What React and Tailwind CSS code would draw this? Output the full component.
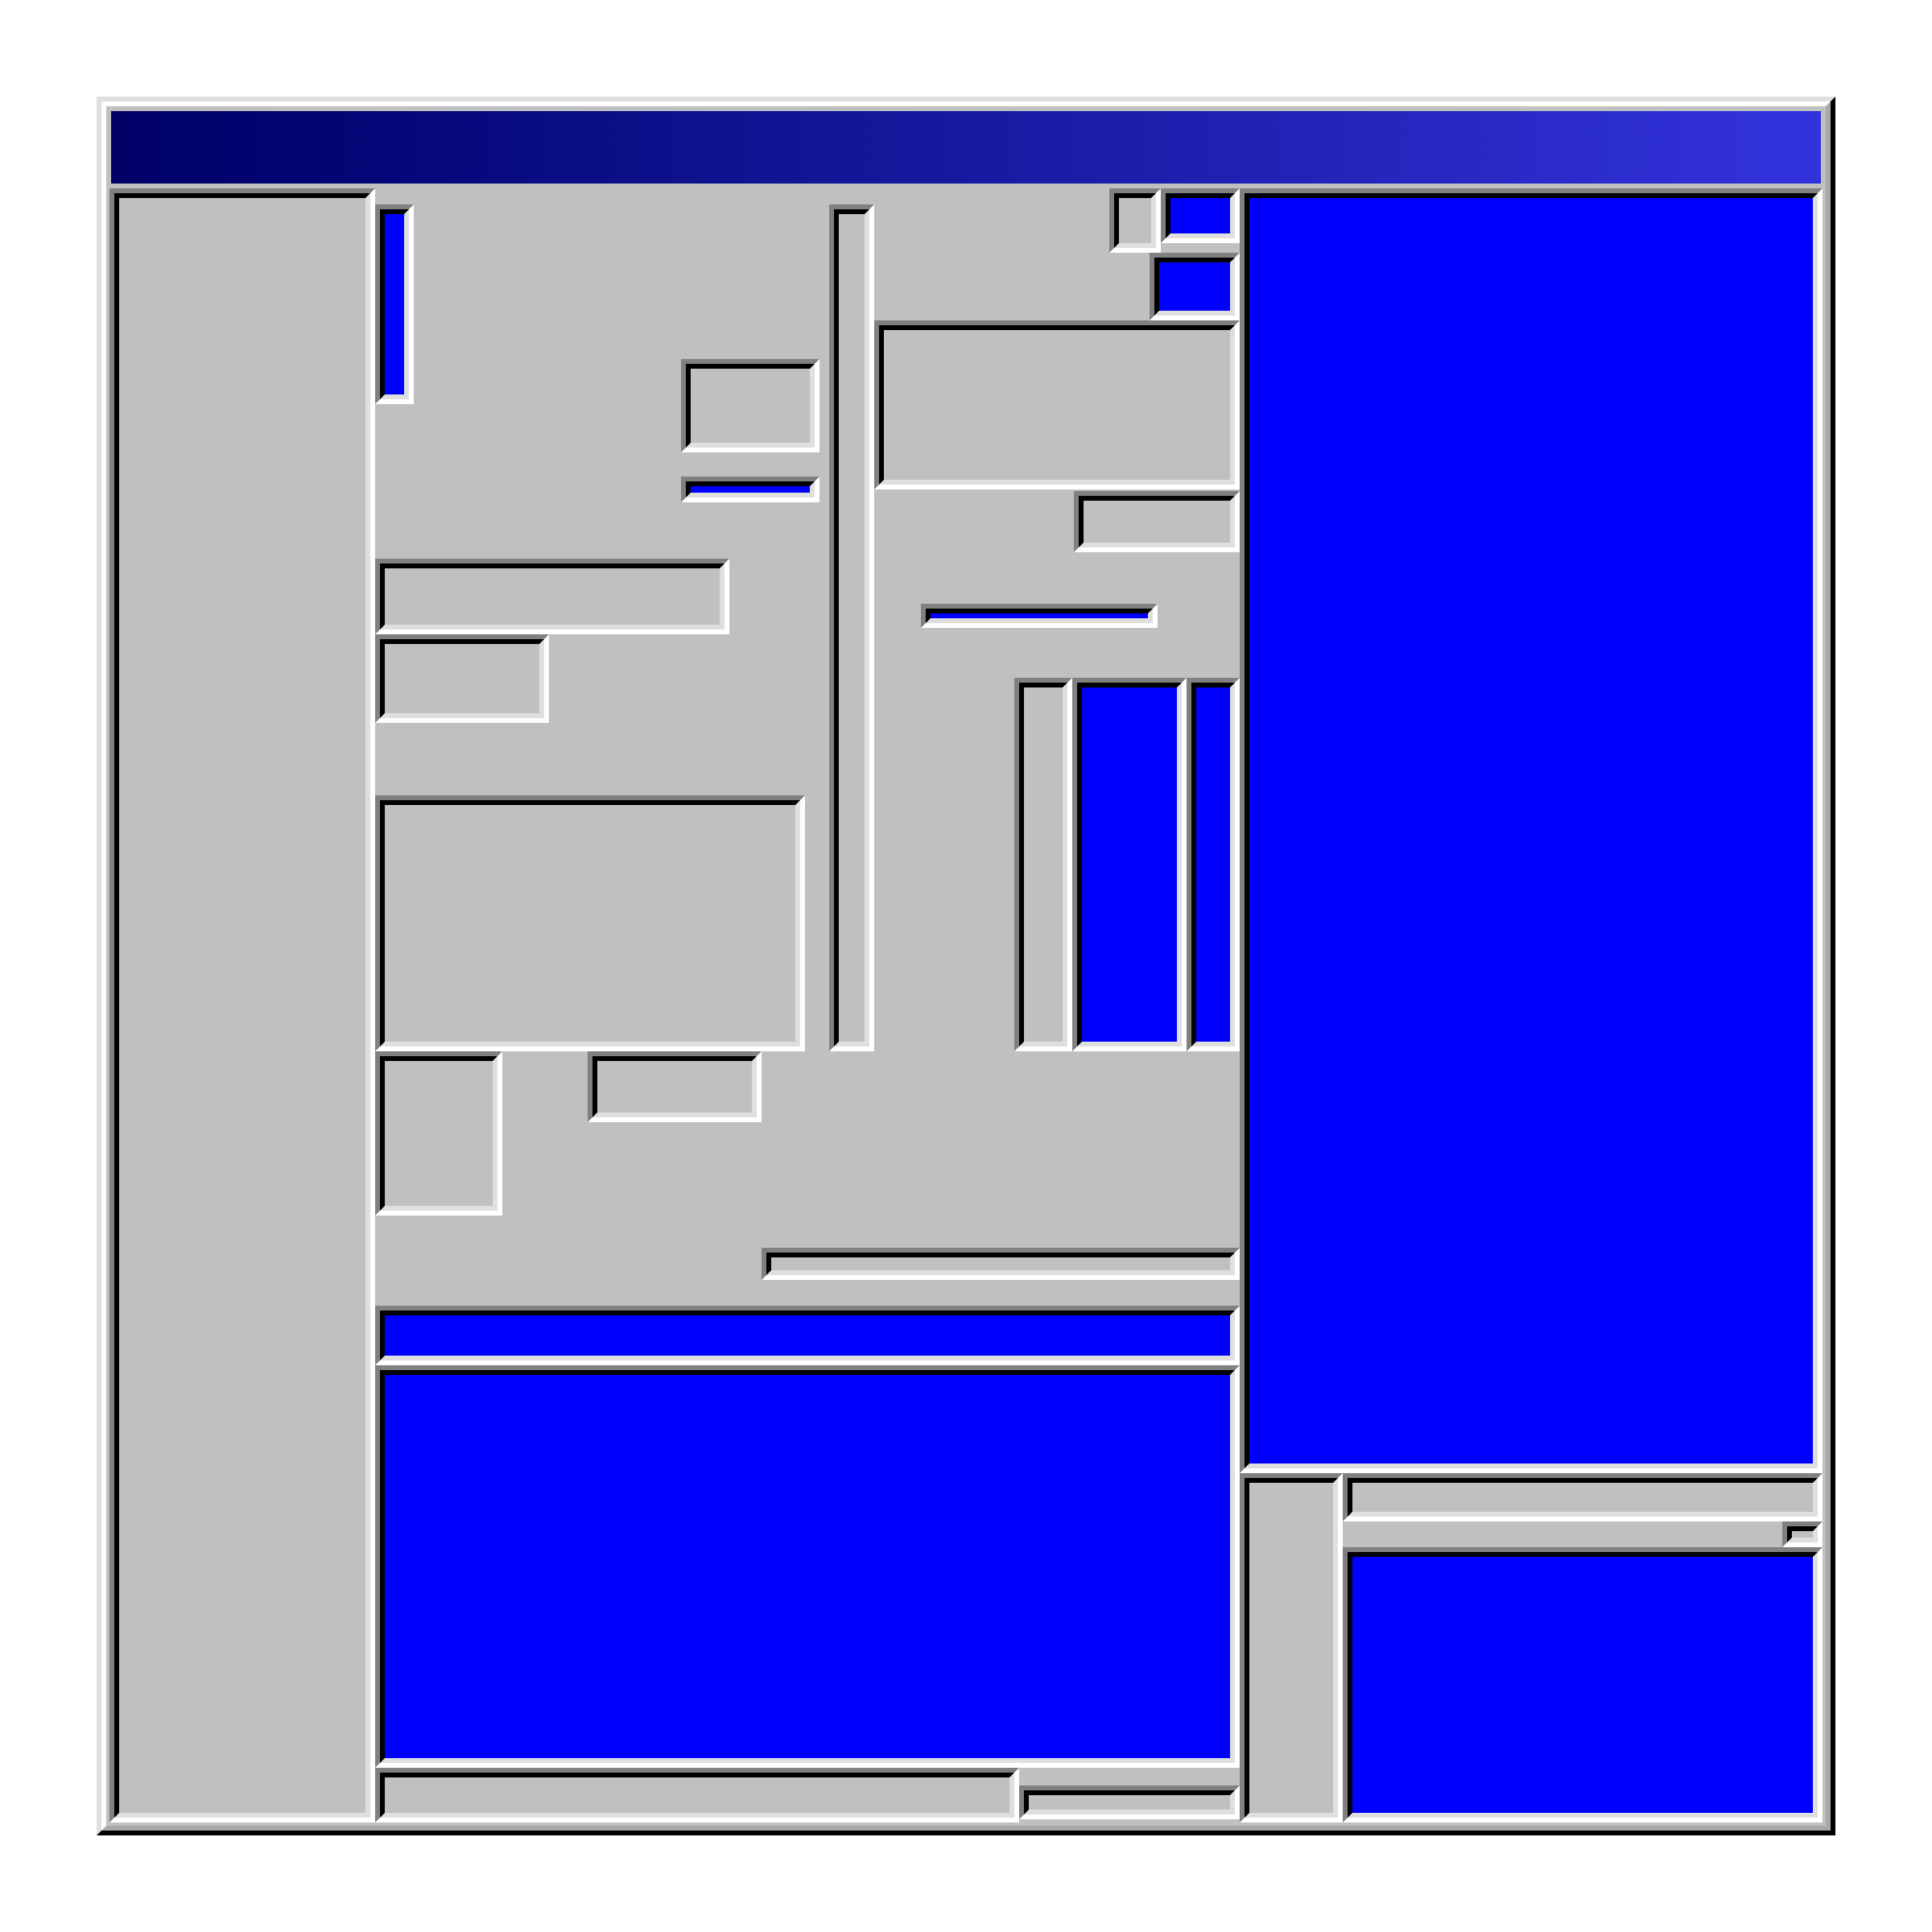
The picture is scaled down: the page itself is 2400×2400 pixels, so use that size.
import React from "react";

// sunken 98-style well: grey/black on top-left, light/white on bottom-right
function Well({ className = "", fill = "bg-[#c0c0c0]" }) {
  return (
    <div
      className={`shrink-0 border-[6px] border-t-[#808080] border-l-[#808080] border-r-white border-b-white ${className}`}
    >
      <div
        className={`h-full w-full border-[6px] border-t-black border-l-black border-r-[#dfdfdf] border-b-[#dfdfdf] ${fill}`}
      />
    </div>
  );
}

const BLUE = "bg-[#0000ff]";

export default function App() {
  return (
    <div className="min-h-screen bg-white p-[120px]">
      <div className="h-[2160px] w-[2160px] border-[6px] border-t-[#dfdfdf] border-l-[#dfdfdf] border-r-black border-b-black">
        <div className="flex h-full w-full flex-col border-[6px] border-t-white border-l-white border-r-[#a9a9a9] border-b-[#a9a9a9] bg-[#c0c0c0] p-[4px]">
          {/* title bar */}
          <div className="m-[2px] h-[90px] shrink-0 bg-linear-to-r from-[#000066] to-[#3333dd]" />

          {/* body */}
          <div className="mt-[4px] flex h-[2030px] shrink-0">
            {/* left pane */}
            <Well className="h-[2030px] w-[330px]" />

            {/* middle column */}
            <div className="flex w-[1074px] shrink-0 flex-col">
              <div className="flex h-[1072px] shrink-0">
                {/* left stack */}
                <div className="flex w-[564px] shrink-0 flex-col items-start">
                  <div className="flex h-[390px] shrink-0 items-start">
                    <Well className="mt-[20px] h-[248px] w-[48px]" fill={BLUE} />
                    <div className="ml-[332px] flex flex-col">
                      <Well className="mt-[212px] h-[116px] w-[172px]" />
                      <Well className="mt-[30px] h-[32px] w-[172px]" fill={BLUE} />
                    </div>
                  </div>
                  <Well className="mt-[70px] h-[94px] w-[440px]" />
                  <Well className="h-[110px] w-[216px]" />
                  <Well className="mt-[90px] h-[318px] w-[534px]" />
                </div>

                {/* tall bar */}
                <Well className="mt-[20px] h-[1052px] w-[56px]" />

                {/* right stack */}
                <div className="flex w-[454px] shrink-0 flex-col">
                  <div className="flex h-[80px] shrink-0 items-start justify-end">
                    <Well className="h-[80px] w-[64px]" />
                    <Well className="h-[68px] w-[98px]" fill={BLUE} />
                  </div>
                  <Well className="h-[84px] w-[112px] self-end" fill={BLUE} />
                  <Well className="h-[210px] w-[454px]" />
                  <Well className="mt-[2px] h-[76px] w-[206px] self-end" />
                  <Well className="ml-[58px] mt-[64px] h-[30px] w-[294px]" fill={BLUE} />
                  <div className="mt-[62px] flex h-[464px] shrink-0 pl-[174px]">
                    <Well className="h-[464px] w-[72px]" />
                    <Well className="h-[464px] w-[142px]" fill={BLUE} />
                    <Well className="h-[464px] w-[66px]" fill={BLUE} />
                  </div>
                </div>
              </div>

              <div className="flex h-[316px] shrink-0 items-start">
                <Well className="h-[204px] w-[158px]" />
                <Well className="ml-[106px] h-[88px] w-[216px]" />
                <Well className="mt-[244px] h-[40px] w-[594px]" />
              </div>

              <Well className="h-[74px] w-[1074px]" fill={BLUE} />
              <Well className="h-[500px] w-[1074px]" fill={BLUE} />

              <div className="flex h-[68px] shrink-0 items-start">
                <Well className="h-[68px] w-[800px]" />
                <Well className="mt-[22px] h-[42px] w-[274px]" />
              </div>
            </div>

            {/* right column */}
            <div className="flex w-[724px] shrink-0 flex-col">
              <Well className="h-[1596px] w-[724px]" fill={BLUE} />
              <div className="flex h-[434px] shrink-0">
                <Well className="h-[434px] w-[128px]" />
                <div className="flex w-[596px] shrink-0 flex-col">
                  <Well className="h-[60px] w-[596px]" />
                  <div className="flex h-[32px] shrink-0 justify-end">
                    <Well className="h-[32px] w-[50px]" />
                  </div>
                  <Well className="h-[342px] w-[596px]" fill={BLUE} />
                </div>
              </div>
            </div>
          </div>
        </div>
      </div>
    </div>
  );
}
